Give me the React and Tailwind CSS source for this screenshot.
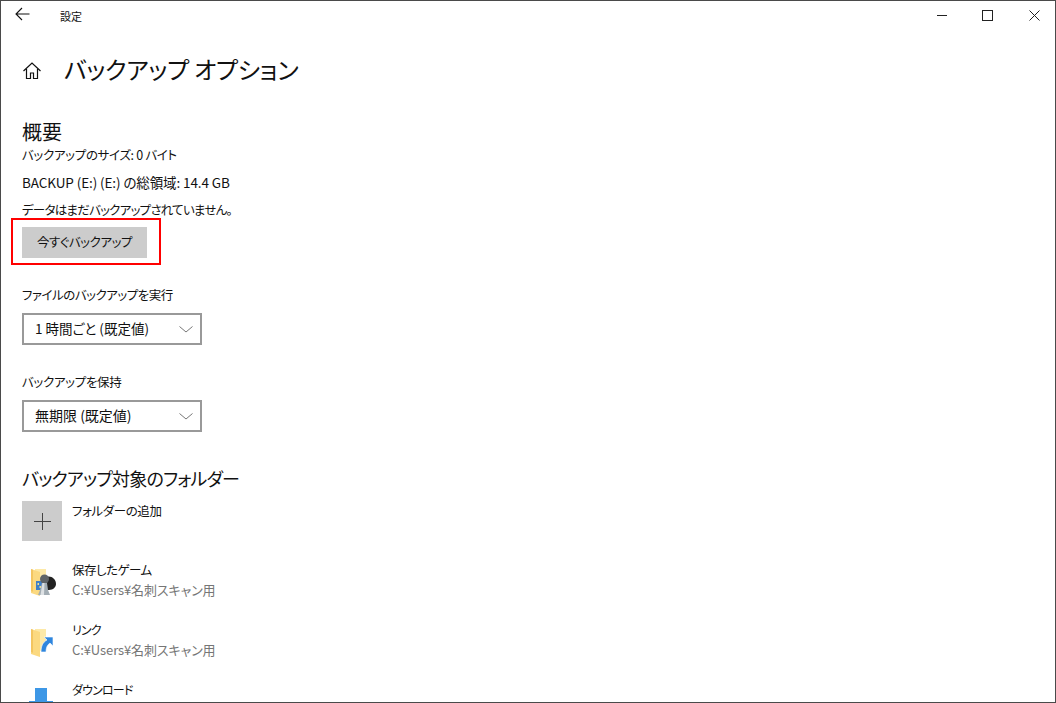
const FONT = 'font-["Noto_Sans_CJK_JP","Noto_Sans",sans-serif] [font-feature-settings:"palt"]'

function BackIcon() {
  return (
    <svg width="15" height="14" viewBox="0 0 15 14" fill="none" stroke="#111" strokeWidth="1.1">
      <path d="M1 7h13.5M7 1 1 7l6 6" />
    </svg>
  )
}

function HomeIcon() {
  return (
    <svg width="18" height="17" viewBox="0 0 18 17" fill="none" stroke="#111" strokeWidth="1.2">
      <path d="M.5 9 9 1l8.500 8" />
      <path d="M3.500 7v9.500h4v-5.500h3v5.500h4V7" />
    </svg>
  )
}

function Chevron() {
  return (
    <svg width="14" height="7" viewBox="0 0 14 7" fill="none" stroke="#777" strokeWidth="1">
      <path d="M.5.5 7 6l6.500-5.500" />
    </svg>
  )
}

function FolderBase({ h = 24 }) {
  return (
    <>
      <path d={`M6 1h11v${h - 3}H6z`} fill="#fde9a8" />
      <path d={`M2 1l9 3v${h}l-9-3z`} fill="#fbd980" />
      <path d={`M2 1l2 .7v${h - 2}l-2-.7z`} fill="#f3c560" />
    </>
  )
}

function GamesIcon() {
  return (
    <svg width="28" height="30" viewBox="0 0 28 30">
      <FolderBase />
      <path d="M7 13h6v9H7z" fill="#3f7fc8" />
      <path d="M8.500 15h1.500v2H8.500zM10.500 18H12v2h-1.500z" fill="#f3e08a" />
      <path d="M17 9c5-2 10 2 10 7 0 3-3 6-7 6h-3z" fill="#222" />
      <circle cx="15.500" cy="11" r="4.500" fill="#5f6468" />
      <path d="M13 15h5l1 7 2 5H9l2-5z" fill="#a3adb4" />
      <path d="M13.500 15h2l-.5 12h-3.500z" fill="#dde1e4" />
    </svg>
  )
}

function LinkIcon() {
  return (
    <svg width="28" height="30" viewBox="0 0 28 30">
      <FolderBase h={25} />
      <path d="M15 9h9v9l-3-3c-3 2-4 5-4 9h-5c0-6 2-10 6-12z" fill="#2f86de" stroke="#fff" strokeWidth=".6" />
    </svg>
  )
}

function DownloadIcon() {
  return (
    <svg width="28" height="30" viewBox="0 0 28 30">
      <path d="M6 0h12v13h6v2H0v-2h6z" fill="#3d97e6" />
    </svg>
  )
}

function Dropdown({ label, labelClass, value, valueClass }) {
  return (
    <div>
      <div className={`text-[12.5px] leading-[18px] text-[#111] ${labelClass}`}>{label}</div>
      <div className="mt-[9px] flex h-[32px] w-[180px] items-center justify-between border-2 border-[#999999] pl-[11px] pr-[7px] text-[#111]">
        <span className={`mt-[-1px] ${valueClass}`}>{value}</span>
        <Chevron />
      </div>
    </div>
  )
}

function FolderRow({ icon, name, nameClass, path }) {
  return (
    <div className="flex h-[60px] items-start">
      <div className="ml-[7px] mt-[18px] w-[43px] shrink-0">{icon}</div>
      <div className="pt-[10px]">
        <div className={`leading-[20px] text-[#111] ${nameClass}`}>{name}</div>
        {path && <div className="text-[13px] leading-[20px] tracking-[-0.1px] text-[#767676]">{path}</div>}
      </div>
    </div>
  )
}

export default function App() {
  return (
    <div className={`${FONT} flex h-[703px] w-[1056px] flex-col overflow-hidden border border-[#4a4a4a] bg-white`}>
      <div className="flex h-[28px] shrink-0 items-center">
        <div className="mt-[-2px] flex w-[59px] justify-center pr-[16px]">
          <BackIcon />
        </div>
        <span className="mt-[2px] text-[11px] text-[#111]">設定</span>
        <div className="ml-auto flex h-full items-center">
          <div className="flex w-[46px] justify-center pl-[3px]"><div className="h-px w-[10px] bg-[#222]" /></div>
          <div className="flex w-[46px] justify-center pl-[3px]"><div className="h-[11px] w-[11px] border border-[#222]" /></div>
          <div className="flex w-[46px] justify-center pl-[4px]">
            <svg width="11" height="11" viewBox="0 0 11 11" stroke="#222" strokeWidth="1"><path d="M.5.5l10 10M10.500.5l-10 10" /></svg>
          </div>
        </div>
      </div>

      <div className="pl-[21px]">
        <div className="mt-[15px] flex h-[50px] items-center">
          <div className="ml-px mt-[2px] flex"><HomeIcon /></div>
          <h1 className="ml-[23px] text-[24px] font-normal tracking-[-0.25px] text-[#111]">バックアップ オプション</h1>
        </div>

        <div className="mt-[25px] text-[20px] leading-[26px] text-[#111]">概要</div>
        <div className="mt-px text-[12.5px] leading-[18px] tracking-[-0.33px] text-[#111]">バックアップのサイズ: 0 バイト</div>
        <div className="mt-[9px] text-[13.5px] leading-[18px] tracking-[-0.1px] text-[#111]">BACKUP (E:) (E:) の総領域: 14.4 GB</div>
        <div className="mt-[10px] text-[12.5px] leading-[18px] tracking-[-0.76px] text-[#111]">データはまだバックアップされていません。</div>

        <div className="relative mb-[28px] mt-[8px] w-[125px]">
          <button className="h-[31px] w-[125px] bg-[#cccccc] text-[12.5px] tracking-[-0.45px] text-[#111]">今すぐバックアップ</button>
          <div className="absolute left-[-11px] top-[-9px] h-[47px] w-[150px] border-2 border-[#ff0000]" />
        </div>

        <Dropdown label="ファイルのバックアップを実行" labelClass="tracking-[-0.5px]" value="1 時間ごと (既定値)" valueClass="text-[13.5px]" />
        <div className="mt-[28px]">
          <Dropdown label="バックアップを保持" labelClass="tracking-[-0.33px]" value="無期限 (既定値)" valueClass="text-[14px]" />
        </div>

        <div className="mt-[33px] text-[18px] leading-[26px] tracking-[-0.8px] text-[#111]">バックアップ対象のフォルダー</div>
        <div className="mt-[10px] flex h-[40px]">
          <div className="flex h-[40px] w-[40px] items-center justify-center bg-[#cccccc]">
            <svg width="17" height="17" viewBox="0 0 17 17" stroke="#444" strokeWidth="1"><path d="M8.500 0v17M0 8.500h17" /></svg>
          </div>
          <div className="ml-[10px] text-[12.5px] leading-[19px] tracking-[-0.4px] text-[#111]">フォルダーの追加</div>
        </div>

        <div className="mt-[9px]">
          <FolderRow icon={<GamesIcon />} name="保存したゲーム" nameClass="text-[12.5px] tracking-[-0.5px]" path="C:¥Users¥名刺スキャン用" />
          <FolderRow icon={<LinkIcon />} name="リンク" nameClass="text-[12px] tracking-[-0.8px]" path="C:¥Users¥名刺スキャン用" />
          <FolderRow icon={<DownloadIcon />} name="ダウンロード" nameClass="text-[12px] tracking-[-0.8px]" />
        </div>
      </div>
    </div>
  )
}
